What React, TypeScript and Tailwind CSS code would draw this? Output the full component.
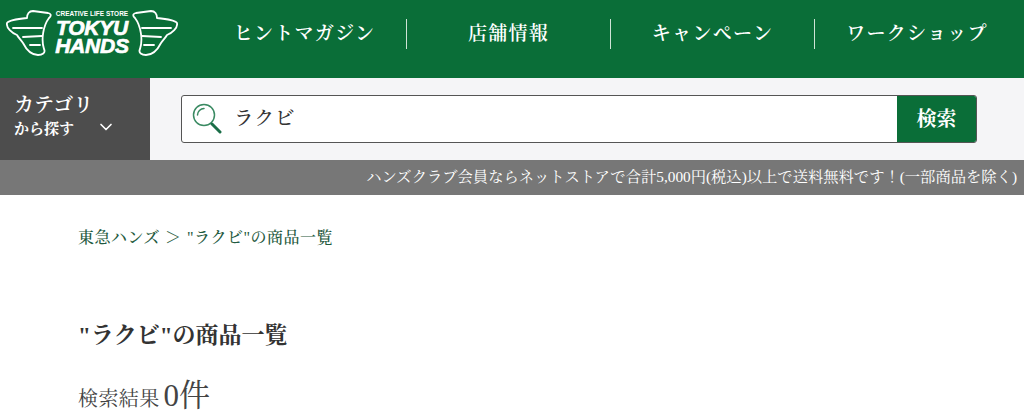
import { ChevronDown } from 'lucide-react'

const font = { fontFamily: '"Liberation Serif", "Noto Serif CJK JP", "Noto Sans CJK JP", serif' }

function Wing({ flip }: { flip?: boolean }) {
  return (
    <svg width="46" height="46" viewBox="0 0 46 46" fill="none" stroke="white" strokeWidth="1.8" strokeLinecap="round" strokeLinejoin="round" className={flip ? '-scale-x-100' : ''}>
      <path d="M1 13 C3 10 10 9 21 8 C21 4 23 1 27 1 L42 3 C46 4 45 6 43 8 C37 16 35 30 38 39 C40 43 36 45 32 45 C25 45 20 39 17 33 C14 29 12 27 11 25 C6 23 0 18 1 13 Z" />
      <path d="M7 18 L36 18" />
      <path d="M17 27 L36 26" />
      <path d="M24 35 L34 35" />
    </svg>
  )
}

function Logo() {
  return (
    <div className="flex items-center w-[172px] ml-[6px] mt-[-12px]">
      <Wing />
      <div className="w-[80px] flex flex-col items-center text-white font-black italic leading-none" style={{ fontFamily: '"Liberation Sans", sans-serif' }}>
        <span className="text-[6.5px] not-italic font-bold mb-[1px] whitespace-nowrap">CREATIVE LIFE STORE</span>
        <span className="text-[21px] leading-[19px] tracking-[-0.2px] [-webkit-text-stroke:0.7px_white]">TOKYU</span>
        <span className="text-[21px] leading-[18px] tracking-[-0.2px] [-webkit-text-stroke:0.7px_white]">HANDS</span>
      </div>
      <Wing flip />
    </div>
  )
}

const navItems = ['ヒントマガジン', '店舗情報', 'キャンペーン', 'ワークショップ']

export default function App() {
  return (
    <div className="w-[1024px] h-[414px] overflow-hidden bg-white" style={font}>
      {/* header */}
      <header className="h-[78px] bg-[#0a6e38] flex items-center">
        <Logo />
        <nav className="flex items-center ml-[25px] mt-[-10px] flex-1">
          {navItems.map((item, i) => (
            <div key={item} className={`w-[204px] h-[30px] flex items-center justify-center text-white text-[19px] font-semibold tracking-[1.3px] ${i < 3 ? 'border-r border-[#cfe3d6]' : ''}`}>
              {item}
            </div>
          ))}
        </nav>
      </header>

      {/* search */}
      <div className="h-[82px] flex bg-[#f5f5f7]">
        <div className="w-[150px] bg-[#4d4d4d] text-white pl-[14px] pt-[14px]">
          <div className="text-[20px] leading-[26px] font-semibold">カテゴリ</div>
          <div className="flex items-center">
            <span className="text-[15px] leading-[22px] font-bold">から探す</span>
            <ChevronDown size={20} strokeWidth={2} className="ml-[22px] -mt-[4px]" />
          </div>
        </div>
        <div className="flex-1 pl-[31px] pt-[17px]">
          <div className="w-[796px] h-[48px] flex rounded-[3px] border border-[#555] bg-white overflow-hidden">
            <div className="flex-1 flex items-center pl-[10px]">
              <svg width="30" height="32" viewBox="0 0 30 32" fill="none">
                <circle cx="12" cy="12" r="10.5" stroke="#3a8a62" strokeWidth="1.5" />
                <path d="M5.5 12 C5.5 8.5 8.5 5.5 12 5.5" stroke="#3a8a62" strokeWidth="1.5" strokeLinecap="round" />
                <path d="M20 21 L28 29" stroke="#1a6e48" strokeWidth="3" strokeLinecap="round" />
              </svg>
              <span className="ml-[12px] text-[19.5px] font-medium text-[#333] tracking-[1px]">ラクビ</span>
            </div>
            <div className="w-[79px] bg-[#0a6e38] flex items-center justify-center text-white text-[20px] font-bold">検索</div>
          </div>
        </div>
      </div>

      {/* notice */}
      <div className="h-[35px] bg-[#777777] text-white text-[15.3px] flex items-center justify-end pr-[7px] whitespace-nowrap">
        ハンズクラブ会員ならネットストアで合計5,000円(税込)以上で送料無料です！(一部商品を除く)
      </div>

      {/* content */}
      <main className="pl-[78px]">
        <div className="mt-[31px] flex text-[16px] leading-[24px] font-medium text-[#1f5a40] whitespace-nowrap">
          <span className="tracking-[0.5px]">東急ハンズ</span>
          <span className="ml-[5px] mr-[6px]">＞</span>
          <span className="tracking-[0.5px]">"ラクビ"の商品一覧</span>
        </div>
        <h1 className="mt-[70px] text-[23px] leading-[32px] font-bold text-[#333]">"ラクビ"の商品一覧</h1>
        <div className="mt-[26px] flex items-baseline text-[#444]">
          <span className="text-[20px] tracking-[0.4px]">検索結果</span>
          <span className="text-[31px] ml-[4px] leading-[36px]">0件</span>
        </div>
      </main>
    </div>
  )
}
